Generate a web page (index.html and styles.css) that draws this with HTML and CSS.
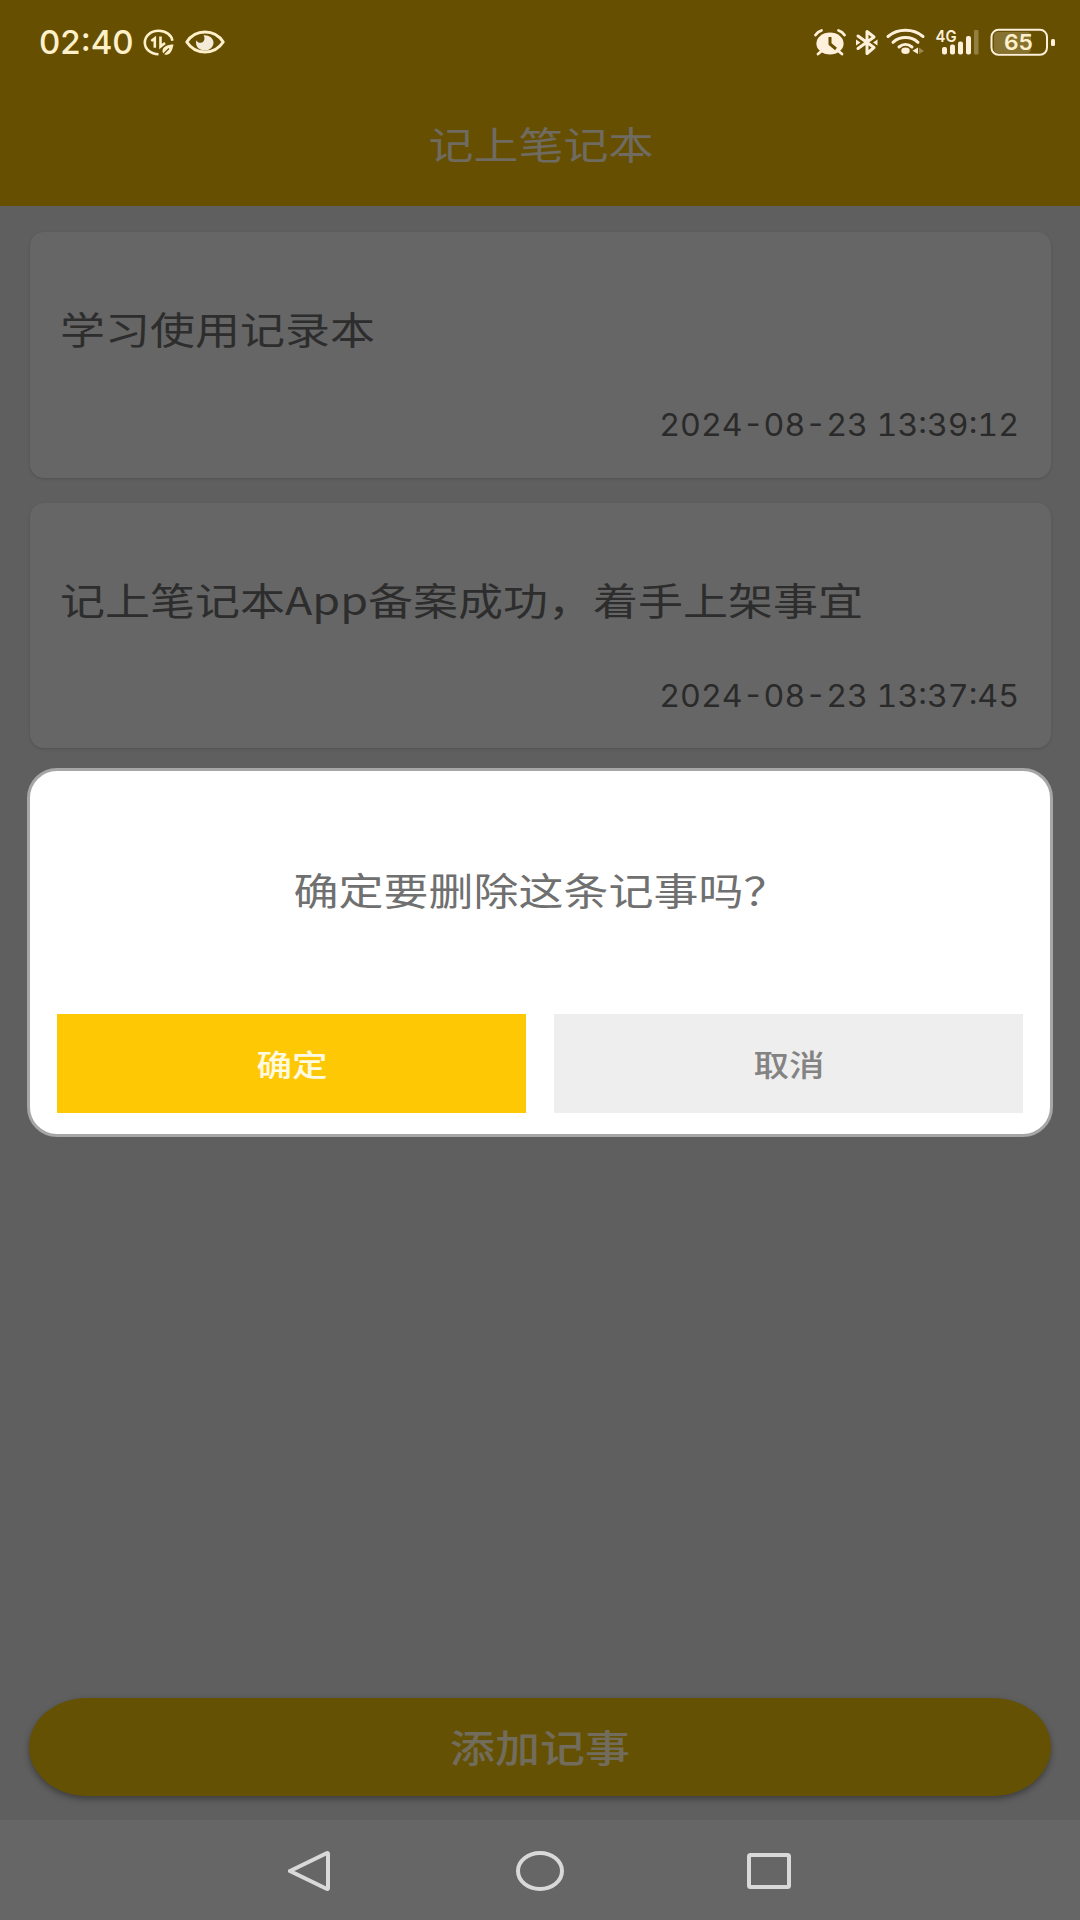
FILE: index.html
```html
<!DOCTYPE html>
<html lang="zh-CN">
<head>
<meta charset="utf-8">
<title>记上笔记本</title>
<link rel="stylesheet" href="styles.css">
</head>
<body>
<div class="app">
  <header class="header">
    <div class="status">
      <div class="status-left">
        <span class="clock">02:40</span>
        <svg class="ic-data" width="32" height="28" viewBox="0 0 32 28" fill="none" stroke="#fff0cc" stroke-width="2.600">
          <path d="M29.400 11.800C28.600 6 23 1.800 15.500 1.800 7.800 1.800 1.800 7 1.800 13.600S7.600 25 15.500 25.300"/>
          <path d="M8.300 12 11.800 9.300V18.800M17.500 7.500V17.500l4.500-3.500"/>
          <path d="M30.500 15.500C24 15.500 19.500 18 19.500 22c0 3 2.500 4.300 5 3.500C28.500 24.500 29.500 20 30.500 15.500Z" fill="#fff0cc" stroke="none"/>
          <path d="M19 26.500 26 19.500" stroke="#664f00" stroke-width="1.200"/>
        </svg>
        <svg class="ic-eye" width="40" height="24" viewBox="0 0 40 24">
          <path d="M1.800 12C6 5.500 12.500 2 20 2s14 3.500 18.200 10C34 18.500 27.500 22 20 22S6 18.500 1.800 12Z" fill="none" stroke="#fff0cc" stroke-width="3" stroke-linejoin="round"/>
          <path d="M18.500 5.200C24 4.800 28.500 8 28.500 12.500S24.500 20.500 19.500 20.500 11 17 11 12.800c0-1 .2-1.800.6-2.500 1 2.400 3 3 5 2.300 3-1 3.700-4.600 1.900-7.400Z" fill="#f3ead8"/>
        </svg>
      </div>
      <div class="status-right">
        <svg width="244" height="46" viewBox="0 -8 244 46">
          <g fill="#fff0dc" stroke="#fff0dc">
            <ellipse cx="17" cy="15.500" rx="13.600" ry="11" stroke="none"/>
            <path d="M2.500 7C4 4.800 6 3.200 8.500 2.500M25.500 2.500c2.500.7 4.500 2.300 6 4.500M8 23.500 5 26M26 23.500l3 2.500" fill="none" stroke-width="2.800" stroke-linecap="round"/>
            <path d="M17 9V16l6 5" fill="none" stroke="#664f00" stroke-width="3"/>
            <path d="M45 8 61 19.500l-7 6V3.500l7 5.500L45 20.500" fill="none" stroke-width="3" stroke-linejoin="round" stroke-linecap="round"/>
            <path d="M43 11.500l4.500 3-4.500 3zM64.500 11.500l-4.500 3 4.500 3z" stroke="none"/>
            <path d="M75 8.500C85 .300 100 .300 110 8.500M80 14.300c7-6.300 18-6.300 25 0M86 19c4-3.500 9-3.500 13 0" fill="none" stroke-width="3" stroke-linecap="round"/>
            <ellipse cx="92.500" cy="22.800" rx="4.200" ry="3.200" stroke="none"/>
            <path d="M99.500 22.800 105 19.500V26z" stroke="none"/>
            <path d="M106 19.500v6.500l5-3z" stroke="none" opacity=".35"/>
            <rect x="129" y="19" width="5" height="7.500" rx="2" stroke="none"/>
            <rect x="137" y="16.500" width="5" height="10" rx="2" stroke="none"/>
            <rect x="145" y="13.500" width="5" height="13" rx="2" stroke="none"/>
            <rect x="153" y="8" width="5" height="18.500" rx="2" stroke="none"/>
            <rect x="161" y="2" width="4.500" height="24.500" rx="1" stroke="none" opacity=".3"/>
            <rect x="181" y="4" width="37" height="21" rx="4" stroke="none" opacity=".22"/>
            <rect x="178.500" y="1.800" width="55.500" height="25" rx="7" fill="none" stroke-width="2"/>
            <rect x="238" y="11" width="4" height="7" rx="1.500" stroke="none"/>
          </g>
          <text class="net" x="122.500" y="13.500" textLength="21" lengthAdjust="spacingAndGlyphs">4G</text>
          <text class="batt" x="191" y="22.300" textLength="29" lengthAdjust="spacingAndGlyphs">65</text>
        </svg>
      </div>
    </div>
    <h1 class="title"><span class="wide">记上笔记本</span></h1>
  </header>

  <main class="notes">
    <article class="card">
      <p class="note"><span class="wide wide-left">学习使用记录本</span></p>
      <time class="date">2024-08-23 13:39:12</time>
    </article>
    <article class="card">
      <p class="note"><span class="wide wide-left">记上笔记本App备案成功，着手上架事宜</span></p>
      <time class="date">2024-08-23 13:37:45</time>
    </article>
  </main>

  <footer class="bottom">
    <button class="add"><span class="wide">添加记事</span></button>
  </footer>

  <nav class="nav">
    <svg width="42" height="42" viewBox="0 0 42 42"><path d="M2 21 38.500 3.200Q40 2.500 40 4V38Q40 39.500 38.500 38.800Z"/></svg>
    <svg width="50" height="42" viewBox="0 0 50 42"><ellipse cx="26" cy="21" rx="22" ry="18"/></svg>
    <svg width="44" height="42" viewBox="0 0 44 42"><rect x="2" y="5" width="40" height="32" rx="1.500"/></svg>
  </nav>

  <section class="dialog" role="dialog">
    <p class="question"><span class="wide">确定要删除这条记事吗？</span></p>
    <div class="actions">
      <button class="btn ok"><span class="wide">确定</span></button>
      <button class="btn cancel"><span class="wide">取消</span></button>
    </div>
  </section>
</div>
</body>
</html>
```
FILE: styles.css
```css
* { box-sizing: border-box; }
body { margin: 0; }
h1, p { margin: 0; font-weight: 400; }
button { border: 0; padding: 0; font-family: inherit; }

.app {
  position: relative;
  width: 1080px;
  height: 1920px;
  display: flex;
  flex-direction: column;
  overflow: hidden;
  background: #5f5f5f;
  font-family: "Noto Sans CJK SC", sans-serif;
}

/* the system typeface is wider than it is tall */
.wide { display: inline-block; white-space: nowrap; transform: scaleX(1.184); }
.wide-left { transform-origin: left center; }

.header { height: 206px; background: #664f00; display: flex; flex-direction: column; }
.status {
  height: 84px;
  padding: 0 23px 0 39px;
  display: flex;
  justify-content: space-between;
  align-items: center;
}
.status-left { display: flex; align-items: center; }
.clock {
  width: 96px;
  font: 500 33px/84px Inter, sans-serif;
  color: #fff0cc;
}
.ic-data { margin-left: 8px; margin-top: 1px; }
.ic-eye { margin-left: 10px; }
.status-right { display: flex; padding-top: 1px; }
.net { font: 600 16px Inter, sans-serif; fill: #fff0dc; }
.batt { font: 600 22px Inter, sans-serif; fill: #fff0cc; }

.title {
  height: 122px;
  padding-left: 2px;
  line-height: 118px;
  text-align: center;
  font-size: 38px;
  color: #6f6b61;
}

.notes { flex: 1; padding: 26px 29px 0 30px; display: flex; flex-direction: column; gap: 25px; }
.card {
  height: 245.500px;
  padding: 67px 32px 0 30px;
  border-radius: 14px;
  background: #666;
  box-shadow: 0 1px 3px rgba(0, 0, 0, .15);
  display: flex;
  flex-direction: column;
}
.note { height: 62px; line-height: 57px; font-size: 38px; color: #2d2d2d; }
.date {
  margin-top: 44px;
  align-self: flex-end;
  font: 400 30.500px/40px Inter, sans-serif;
  font-variant-numeric: tabular-nums;
  color: #2a2a2a;
  white-space: nowrap;
  transform: scaleX(1.055);
  transform-origin: right center;
}

.bottom { height: 122px; padding: 0 29px; }
.add {
  display: block;
  width: 100%;
  height: 98px;
  border-radius: 58px / 49px;
  background: #655103;
  box-shadow: 0 3px 6px rgba(0, 0, 0, .35);
  font-size: 38px;
  font-weight: 500;
  line-height: 94px;
  color: #726c5c;
}
.add .wide { margin-bottom: 3px; }

.nav {
  height: 100px;
  padding: 2px 289px 0 288px;
  background: #666;
  display: flex;
  justify-content: space-between;
  align-items: center;
}
.nav svg { fill: none; stroke: #d9d9d9; stroke-width: 4; }

.dialog {
  position: absolute;
  left: 27px;
  top: 768px;
  width: 1026px;
  height: 369px;
  padding: 0 27px;
  border: 3px solid #a6a6a6;
  border-radius: 30px;
  background: #fff;
}
.question { height: 243px; padding-left: 2px; line-height: 236px; text-align: center; font-size: 38px; color: #707070; }
.actions { display: flex; gap: 28px; }
.btn { flex: 1; height: 99px; font-size: 30px; font-weight: 500; line-height: 94px; }
.btn .wide { margin-bottom: 2px; }
.ok { background: #ffc805; color: #fffbe2; }
.cancel { background: #eee; color: #838383; }
```
